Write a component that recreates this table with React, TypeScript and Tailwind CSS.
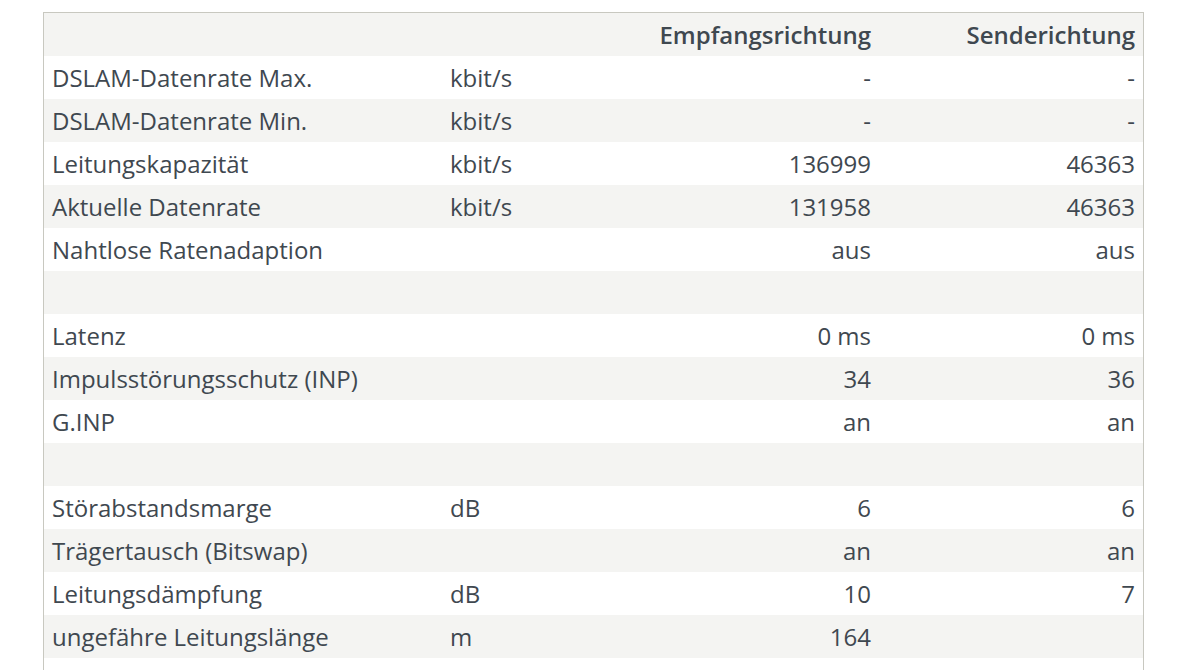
import React from "react";

type Row = { label: string; unit: string; down: string; up: string };

const rows: Row[] = [
  { label: "DSLAM-Datenrate Max.", unit: "kbit/s", down: "-", up: "-" },
  { label: "DSLAM-Datenrate Min.", unit: "kbit/s", down: "-", up: "-" },
  { label: "Leitungskapazität", unit: "kbit/s", down: "136999", up: "46363" },
  { label: "Aktuelle Datenrate", unit: "kbit/s", down: "131958", up: "46363" },
  { label: "Nahtlose Ratenadaption", unit: "", down: "aus", up: "aus" },
  { label: "", unit: "", down: "", up: "" },
  { label: "Latenz", unit: "", down: "0 ms", up: "0 ms" },
  { label: "Impulsstörungsschutz (INP)", unit: "", down: "34", up: "36" },
  { label: "G.INP", unit: "", down: "an", up: "an" },
  { label: "", unit: "", down: "", up: "" },
  { label: "Störabstandsmarge", unit: "dB", down: "6", up: "6" },
  { label: "Trägertausch (Bitswap)", unit: "", down: "an", up: "an" },
  { label: "Leitungsdämpfung", unit: "dB", down: "10", up: "7" },
  { label: "ungefähre Leitungslänge", unit: "m", down: "164", up: "" },
  { label: "", unit: "", down: "", up: "" },
];

export default function App() {
  return (
    <div
      className="min-h-screen bg-white pt-[12px] pl-[43px]"
      style={{ fontFamily: "'Open Sans', sans-serif" }}
    >
      <div className="w-[1101px] border-t border-l border-r border-[#c8c8c0] text-[#3f4850] text-[24px]">
        <div className="grid grid-cols-[397px_200px_239px_263px] h-[43px] items-center bg-[#f4f4f2] font-semibold">
          <div></div>
          <div></div>
          <div className="text-right pr-[9px]">Empfangsrichtung</div>
          <div className="text-right pr-[8px]">Senderichtung</div>
        </div>
        {rows.map((r, i) => (
          <div
            key={i}
            className={
              "grid grid-cols-[397px_200px_239px_263px] h-[43px] items-center " +
              (i % 2 === 1 ? "bg-[#f4f4f2]" : "bg-white")
            }
          >
            <div className="pl-[8px] whitespace-nowrap">{r.label}</div>
            <div className="pl-[9px]">{r.unit}</div>
            <div className="text-right pr-[9px]">{r.down}</div>
            <div className="text-right pr-[8px]">{r.up}</div>
          </div>
        ))}
      </div>
    </div>
  );
}
